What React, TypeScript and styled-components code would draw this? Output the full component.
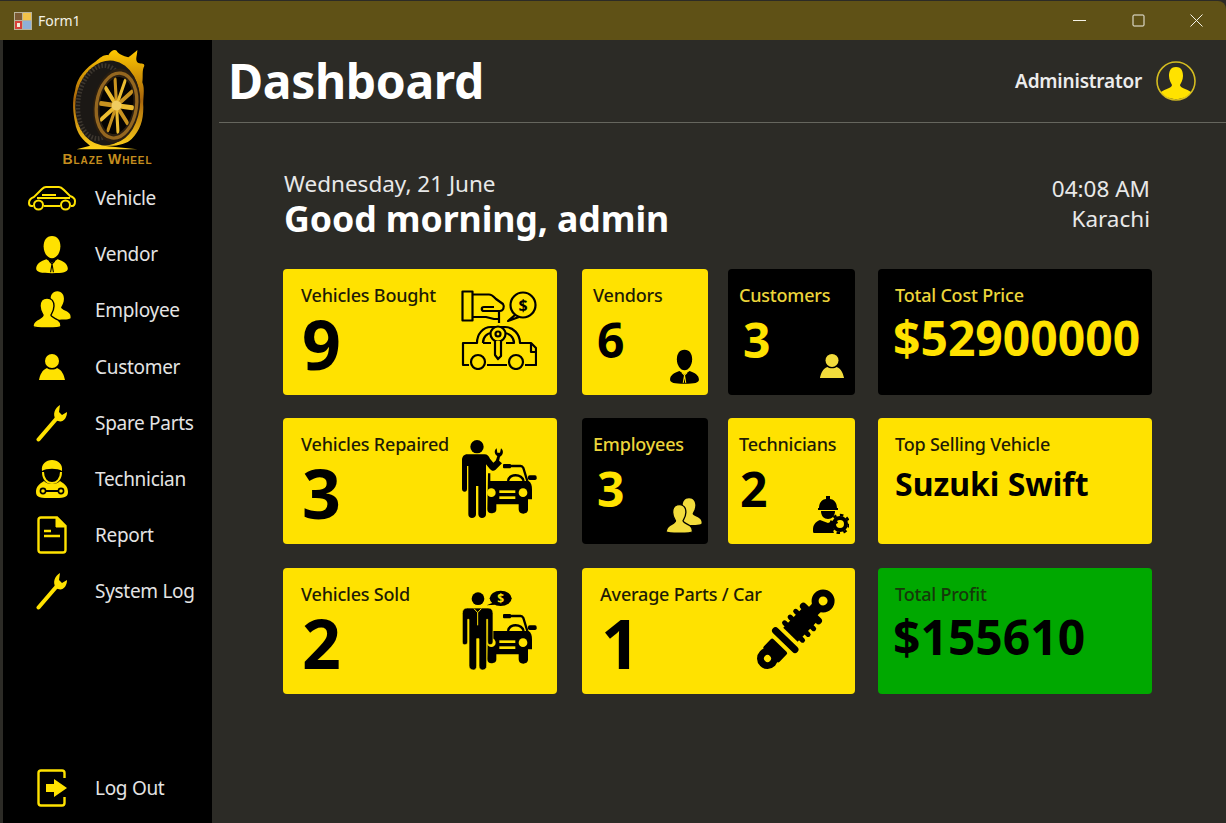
import React from 'react';
import styled, { createGlobalStyle } from 'styled-components';

const YELLOW = '#ffe200';
const PANEL = '#2c2b26';

const GlobalStyle = createGlobalStyle`
    html, body {
        margin: 0;
        padding: 0;
        background: ${PANEL};
        font-family: 'Noto Sans', 'Open Sans', sans-serif;
    }
`;

const Window = styled.div`
    width: 1226px;
    height: 823px;
    overflow: hidden;
    display: flex;
    flex-direction: column;
    background: ${PANEL};
`;

const TitleBar = styled.div`
    height: 39px;
    margin-top: 1px;
    flex: none;
    display: flex;
    align-items: center;
    padding-left: 14px;
    background: #5f5116;
    border-top-right-radius: 8px;
    color: #f4f2e6;
    font-size: 14px;
`;

const TitleText = styled.span`
    margin-left: 6px;
    flex: 1;
`;

const WinButton = styled.div`
    width: 58.5px;
    height: 39px;
    display: flex;
    align-items: center;
    justify-content: center;
`;

const Body = styled.div`
    flex: 1;
    display: flex;
    padding-left: 3px;
    min-height: 0;
`;

const Sidebar = styled.nav`
    width: 209px;
    flex: none;
    background: #000;
    display: flex;
    flex-direction: column;
    padding-top: 8px;
    box-sizing: border-box;
`;

const Brand = styled.div`
    height: 122px;
    flex: none;
    display: flex;
    flex-direction: column;
    align-items: center;
`;

const LogoMark = styled.div`
    display: flex;
    margin-left: 5px;
`;

const BrandName = styled.div`
    margin-top: 2px;
    font-family: 'Liberation Sans', sans-serif;
    font-variant: small-caps;
    font-weight: 700;
    font-size: 14px;
    line-height: 14px;
    letter-spacing: 0.9px;
    color: #c48d1e;
`;

const NavList = styled.div`
    flex: 1;
    display: flex;
    flex-direction: column;
`;

const NavRow = styled.div<{ $foot?: boolean }>`
    height: 56.2px;
    flex: none;
    display: flex;
    align-items: center;
    margin-top: ${p => (p.$foot ? 'auto' : '0')};
    margin-bottom: ${p => (p.$foot ? '7px' : '0')};
    color: #e4e4e4;
    font-size: 19px;
    letter-spacing: -0.3px;
`;

const NavIcon = styled.div`
    width: 92px;
    flex: none;
    display: flex;
    justify-content: center;
    padding-left: 6px;
    box-sizing: border-box;
`;

const Main = styled.main`
    flex: 1;
    min-width: 0;
    padding-left: 7px;
`;

const Header = styled.header`
    height: 83px;
    box-sizing: border-box;
    border-bottom: 1px solid #66665e;
    display: flex;
    align-items: center;
    padding: 0 30px 1px 9px;
`;

const PageTitle = styled.h1`
    margin: 0;
    flex: 1;
    color: #fff;
    font-size: 48px;
    font-weight: 700;
    letter-spacing: -0.35px;
    line-height: 1;
`;

const UserName = styled.span`
    color: #ececec;
    font-size: 19px;
    font-weight: 600;
    letter-spacing: -0.2px;
    margin-right: 14px;
`;

const Content = styled.section`
    padding: 46px 0 0 64px;
    width: 870px;
`;

const Greeting = styled.div`
    display: flex;
    justify-content: space-between;
    height: 100px;
    padding-left: 1px;
    padding-right: 3px;
`;

const DateLine = styled.div`
    color: #e8e8e8;
    font-size: 22.5px;
    line-height: 30px;
`;

const Hello = styled.div`
    color: #fff;
    font-size: 35.7px;
    font-weight: 700;
    line-height: 38px;
    letter-spacing: -0.1px;
`;

const Clock = styled.div`
    padding-top: 5px;
    text-align: right;
    color: #e8e8e8;
    font-size: 22.5px;
    line-height: 30px;
`;

const Cards = styled.div`
    display: grid;
    grid-template-columns: 274px 25px 126px 20px 127px 23px 274px;
    grid-template-rows: 126px 127px 126px;
    row-gap: 23px;
    align-items: start;
`;

type Tone = 'yellow' | 'black' | 'green';

const toneBg: Record<Tone, string> = { yellow: YELLOW, black: '#000', green: '#00a800' };
const toneFg: Record<Tone, string> = { yellow: '#000', black: YELLOW, green: '#000' };
const toneLabel: Record<Tone, string> = { yellow: '#1e1b05', black: '#ecd53a', green: '#16380a' };

const Card = styled.div<{ $tone: Tone; $from: number; $span: number; $pad: number }>`
    grid-column: ${p => p.$from} / span ${p => p.$span};
    height: 126px;
    background: ${p => toneBg[p.$tone]};
    color: ${p => toneFg[p.$tone]};
    border-radius: 4px;
    padding: 14px 0 0 ${p => p.$pad}px;
    box-sizing: border-box;
    display: flex;
    flex-direction: column;
    position: relative;
    overflow: hidden;
`;

const CardLabel = styled.div<{ $tone: Tone }>`
    color: ${p => toneLabel[p.$tone]};
    font-size: 18px;
    font-weight: 500;
    line-height: 24px;
    letter-spacing: -0.2px;
    white-space: nowrap;
`;

const CardValue = styled.div<{ $size: number; $inset: number; $drop: number }>`
    font-size: ${p => p.$size}px;
    font-weight: 700;
    line-height: ${p => p.$size * 1.1}px;
    margin-left: ${p => p.$inset}px;
    margin-top: ${p => p.$drop}px;
    white-space: nowrap;
`;

const CardIcon = styled.div<{ $right: number; $bottom: number }>`
    position: absolute;
    right: ${p => p.$right}px;
    bottom: ${p => p.$bottom}px;
    display: flex;
`;

/* ---- drawings ---- */

const FormIcon = () => (
    <svg width="18" height="18" viewBox="0 0 18 18">
        <rect width="18" height="18" fill="#b9b39a" />
        <rect x="1" y="1" width="7" height="7" fill="#7b5a34" />
        <rect x="9" y="1" width="8" height="7" fill="#f2c34a" />
        <rect x="1" y="9" width="7" height="8" fill="#d8403a" />
        <rect x="9" y="9" width="8" height="8" fill="#8fb0d8" />
        <rect x="3" y="11" width="3" height="4" fill="#f4ecd8" />
    </svg>
);

const spokeAngles = [0, 36, 72, 108, 144, 180, 216, 252, 288, 324];

const TireLogo = () => (
    <svg width="100" height="102" viewBox="0 12 300 306">
        <defs>
            <linearGradient id="flame" x1="0" y1="0" x2="0" y2="1">
                <stop offset="0" stopColor="#ffc800" />
                <stop offset="0.5" stopColor="#a8640a" />
                <stop offset="1" stopColor="#ffd21a" />
            </linearGradient>
        </defs>
        <path
            d="M108 52 C120 40 135 30 145 34 C150 20 165 14 170 20 C175 30 190 35 205 40 C215 32 225 25 232 18 C232 35 225 45 232 55 C240 62 252 55 253 65 C245 80 250 95 247 115 C256 135 248 165 250 190 C250 230 240 260 215 285 C200 300 170 308 130 305 L232 316 L50 316 L90 305 C70 290 50 270 45 235 C40 210 35 170 45 140 C50 100 80 70 108 52 Z"
            fill="url(#flame)"
        />
        <g transform="rotate(8 150 180)">
            <ellipse cx="142" cy="178" rx="96" ry="128" fill="#1b1815" />
            <ellipse cx="122" cy="178" rx="68" ry="110" fill="none" stroke="#3c362e" strokeWidth="14" strokeDasharray="5 5" />
            <ellipse cx="170" cy="182" rx="70" ry="112" fill="#2a1e10" />
            <ellipse cx="170" cy="182" rx="60" ry="98" fill="none" stroke="#94661f" strokeWidth="10" />
            <ellipse cx="170" cy="182" rx="50" ry="86" fill="#050302" />
            <g transform="translate(170 182) scale(1 1.65)">
                {spokeAngles.map((a, i) => (
                    <line
                        key={a}
                        x1="0"
                        y1="0"
                        x2="48"
                        y2="0"
                        transform={`rotate(${a})`}
                        stroke={i % 2 ? '#c8921f' : '#ecbc30'}
                        strokeWidth="9"
                        strokeLinecap="round"
                    />
                ))}
            </g>
            <circle cx="170" cy="182" r="15" fill="#f0cc60" />
        </g>
    </svg>
);

const CarOutline = () => (
    <svg width="48" height="25" viewBox="0 0 48 25" fill="none" stroke={YELLOW} strokeWidth="2">
        <path d="M5 20 H3.5 C2 20 1 19 1 17 C1 14 3 12 6 11 L14 3 C15 2 16 1 18 1 H31 C33 1 34 2 36 4 L42 10 C45 11 47 12 47 15 C47 18 46 20 44 20 H43 M32 20 H16" />
        <path d="M14 9 H28 M9 12 H42" />
        <circle cx="10.5" cy="19" r="4.5" />
        <circle cx="37.5" cy="19" r="4.5" />
    </svg>
);

const SuitPerson = ({ size, color, cut }: { size: number; color: string; cut: string }) => (
    <svg width={size} height={size * 1.15} viewBox="0 0 36 42">
        <path d="M18 1 C24 1 27 6 27 12 C27 19 23 25 18 25 C13 25 9 19 9 12 C9 6 12 1 18 1 Z" fill={color} />
        <path d="M12 26 L18 30 L24 26 C30 28 35 31 35 36 C35 40 30 41 18 41 C6 41 1 40 1 36 C1 31 6 28 12 26 Z" fill={color} />
        <path d="M15 28 L18 31 L21 28 M18 31 L16.5 40 M18 31 L19.5 40" stroke={cut} strokeWidth="1.2" fill="none" />
    </svg>
);

const personPath =
    'M14 7 C19 7 21 11 21 15 C21 19 19 22 18 24 C18 26 22 27 25 29 C28 31 28 33 28 35 C28 37 20 37 14 37 C8 37 0 37 0 35 C0 33 1 31 4 29 C7 27 10 26 10 24 C9 22 7 19 7 15 C7 11 9 7 14 7 Z';

const TwoPeople = ({ size, color, cut }: { size: number; color: string; cut: string }) => (
    <svg width={size} height={size} viewBox="0 0 38 38">
        <path d={personPath} transform="translate(11 -6.5) scale(0.95)" fill={color} />
        <path d={personPath} fill={color} stroke={cut} strokeWidth="1.4" />
    </svg>
);

const Bust = ({ size, color }: { size: number; color: string }) => (
    <svg width={size} height={size} viewBox="0 0 28 28" fill={color}>
        <circle cx="14" cy="8" r="7" />
        <path d="M9 15 C11 17 17 17 19 15 C24 17 26 22 27 27 H1 C2 22 4 17 9 15 Z" />
    </svg>
);

const Wrench = () => (
    <svg width="32" height="38" viewBox="0 0 32 38">
        <path d="M2.5 35.5 L21 14" stroke={YELLOW} strokeWidth="4" strokeLinecap="round" />
        <path d="M20 16 C16 10 19 4 24 1 L23 8 L26 11 L31 8 C31 15 26 20 20 16 Z" fill={YELLOW} />
    </svg>
);

const TechnicianIcon = () => (
    <svg width="34" height="40" viewBox="0 0 34 40">
        <path d="M7 12 C6 5 11 1 17 1 C23 1 28 5 27 12 C23 9 11 9 7 12 Z" fill={YELLOW} />
        <path d="M8 13 C8 20 12 24 17 24 C22 24 26 20 26 13" fill="none" stroke={YELLOW} strokeWidth="2" />
        <path d="M9 22 C12 26 22 26 25 22 C30 25 33 28 33 33 C33 39 28 39 17 39 C6 39 1 39 1 33 C1 28 4 25 9 22 Z" fill={YELLOW} />
        <path d="M10 32 H24" stroke="#000" strokeWidth="2" />
        <circle cx="8" cy="32" r="2.6" fill="none" stroke="#000" strokeWidth="1.6" />
        <circle cx="26" cy="32" r="2.6" fill="none" stroke="#000" strokeWidth="1.6" />
    </svg>
);

const ReportIcon = () => (
    <svg width="30" height="38" viewBox="0 0 30 38" fill="none" stroke={YELLOW} strokeWidth="2.4">
        <path d="M4 1.5 H20 L28.5 10 V34 C28.5 35.5 27.5 36.5 26 36.5 H4 C2.5 36.5 1.5 35.5 1.5 34 V4 C1.5 2.5 2.5 1.5 4 1.5 Z" />
        <path d="M19 1.5 L28.5 11 H19 Z" fill={YELLOW} strokeWidth="1" />
        <path d="M7 15 H14 M7 20 H23" />
    </svg>
);

const LogoutIcon = () => (
    <svg width="31" height="38" viewBox="0 0 31 38" fill="none">
        <path d="M27.5 9 V4 C27.5 2.5 26.5 1.5 25 1.5 H4 C2.5 1.5 1.5 2.5 1.5 4 V34 C1.5 35.5 2.5 36.5 4 36.5 H25 C26.5 36.5 27.5 35.5 27.5 34 V28" stroke={YELLOW} strokeWidth="2.4" />
        <path d="M9 15 H17 V10 L30 19 L17 28 V23 H9 Z" fill={YELLOW} />
    </svg>
);

const AvatarIcon = () => (
    <svg width="40" height="40" viewBox="0 0 40 40">
        <circle cx="20" cy="20" r="19" fill="none" stroke="#d4bc20" strokeWidth="1.6" />
        <path d="M20 6 C26 6 27 11 27 15 C27 19 25 22 24 24 C24 27 31 28 35 31 C31 36 26 38 20 38 C14 38 9 36 5 31 C9 28 16 27 16 24 C15 22 13 19 13 15 C13 11 14 6 20 6 Z" fill={YELLOW} />
    </svg>
);

const WinGlyph = ({ kind }: { kind: 'min' | 'max' | 'close' }) => (
    <svg width="13" height="13" viewBox="0 0 13 13" fill="none" stroke="#f4f2e6" strokeWidth="1">
        {kind === 'min' && <path d="M0 6.5 H13" />}
        {kind === 'max' && <rect x="1" y="1" width="11" height="11" rx="1" />}
        {kind === 'close' && <path d="M0.5 0.5 L12.5 12.5 M12.5 0.5 L0.5 12.5" />}
    </svg>
);

const KeyCarIcon = () => (
    <svg width="76" height="80" viewBox="0 0 76 80" fill="none" stroke="#000" strokeWidth="2.2" strokeLinejoin="round">
        <rect x="1.5" y="1.5" width="10" height="29" />
        <path d="M12 4.5 H28 C31 4.5 33 7 35 9 L42 14 C44 17 42 21 39 21 H23 C20 21 20 17 23 17 H33 M12 27 H25 L33 29 H39" />
        <path d="M38 21 V33" />
        <circle cx="62" cy="15" r="12.5" />
        <path d="M54 25 L47 31 L58 27" />
        <text x="62" y="21" fontSize="16" fontWeight="700" textAnchor="middle" fill="#000" stroke="none" fontFamily="'Noto Sans', sans-serif">$</text>
        <path d="M8 75 H2 V53 H16 C16 44 22 37 30 37 H44 C52 37 59 44 59 53 H70 L75 58 V75 H64 M46 75 H26" />
        <path d="M22 53 C22 47 26 43 31 43 M43 43 C48 43 53 47 53 53 H45 M22 53 H30 M70 53 V62 H75" />
        <circle cx="17" cy="72" r="7" fill={YELLOW} />
        <circle cx="55" cy="72" r="7" fill={YELLOW} />
        <circle cx="37" cy="44" r="7.5" fill={YELLOW} />
        <circle cx="37" cy="44" r="2.5" />
        <path d="M34 51 V65 L37 69 L40 66 V51" fill={YELLOW} />
    </svg>
);

const CarFront = () => (
    <g>
        <path d="M158 90 H188 C192 90 194 92 196 96 L208 135" fill="none" stroke="#000" strokeWidth="7" />
        <rect x="135" y="84" width="24" height="13" rx="3" fill="#000" />
        <rect x="210" y="118" width="26" height="14" rx="5" fill="#000" />
        <path d="M150 135 C155 112 190 112 197 135" fill="none" stroke="#000" strokeWidth="7" />
        <path d="M90 112 H97 V135 H212 C220 140 222 150 222 160 V190 H210 V220 C210 230 203 233 196 233 C187 233 182 228 182 220 V205 H115 V220 C115 230 107 232 100 232 C93 232 88 228 88 220 Z" fill="#000" />
        <circle cx="100" cy="170" r="13" fill={YELLOW} />
        <circle cx="195" cy="170" r="13" fill={YELLOW} />
        <rect x="124" y="163" width="48" height="8" fill={YELLOW} />
        <rect x="124" y="181" width="48" height="8" fill={YELLOW} />
    </g>
);

const MechanicIcon = () => (
    <svg width="84" height="86" viewBox="0 0 252 258">
        <CarFront />
        <circle cx="57" cy="32" r="20" fill="#000" />
        <path d="M28 55 C18 55 12 62 12 72 V158 C12 164 15 167 20 167 C25 167 27 164 27 158 V90 H31 V235 C31 243 36 246 42 246 C48 246 54 243 54 235 V150 H61 V235 C62 243 66 246 72 246 C78 246 84 243 84 235 V85 L95 98 C100 104 106 106 112 102 L132 82 L118 70 L106 80 L96 68 C92 60 88 55 80 55 Z" fill="#000" />
        <path d="M112 78 L118 60 C108 55 108 42 116 37 L118 50 L126 50 L129 37 C138 44 136 58 126 62 L122 80 Z" fill="#000" />
    </svg>
);

const SellerIcon = () => (
    <svg width="84" height="88" viewBox="0 0 252 264">
        <CarFront />
        <circle cx="60" cy="38" r="19" fill="#000" />
        <ellipse cx="128" cy="37" rx="33" ry="23" fill="#000" />
        <path d="M104 50 L86 58 L112 56 Z" fill="#000" />
        <text x="128" y="50" fontSize="36" fontWeight="700" textAnchor="middle" fill={YELLOW} fontFamily="'Noto Sans', sans-serif">$</text>
        <path d="M28 66 C18 66 13 72 13 82 V168 C13 174 16 176 20 176 C25 176 29 174 29 168 V100 H33 V240 C33 248 40 252 46 252 C52 252 56 248 56 240 V158 H63 V240 C63 248 68 252 74 252 C80 252 86 248 86 240 V100 H89 V168 C89 174 92 176 96 176 C100 176 105 174 105 168 V82 C105 72 100 66 90 66 Z" fill="#000" stroke={YELLOW} strokeWidth="2" />
        <path d="M48 68 L59 80 L70 68 M59 80 V118" stroke={YELLOW} strokeWidth="3" fill="none" />
    </svg>
);

const ShockIcon = () => (
    <svg width="78" height="84" viewBox="0 0 78 84">
        <g transform="rotate(44 39 42)">
            <circle cx="39" cy="3" r="8" fill="none" stroke="#000" strokeWidth="7" />
            <rect x="33" y="10" width="12" height="10" fill="#000" />
            <rect x="25" y="17" width="28" height="7" rx="3.5" fill="#000" />
            <rect x="29" y="22" width="20" height="28" fill="#000" />
            <rect x="24" y="27" width="30" height="5" rx="2.5" fill="#000" />
            <rect x="24" y="35" width="30" height="5" rx="2.5" fill="#000" />
            <rect x="24" y="43" width="30" height="5" rx="2.5" fill="#000" />
            <rect x="22" y="54" width="34" height="7" rx="3.5" fill="#000" />
            <rect x="28" y="65" width="22" height="14" rx="2" fill="#000" />
            <circle cx="39" cy="83" r="7" fill="none" stroke="#000" strokeWidth="7" />
        </g>
    </svg>
);

const EngineerIcon = () => (
    <svg width="36" height="38" viewBox="0 0 36 38">
        <path d="M6 12 C6 6 10 3 13 3 V0 H17 V3 C20 3 24 6 24 12 H25 V14 H5 V12 Z" fill="#000" />
        <path d="M8 15 H22 C22 20 19 23 15 23 C11 23 8 20 8 15 Z" fill="#000" />
        <path d="M7 24 L15 27 L22 24 C24 25 25 26 25 27 C21 29 19 33 21 37 H1 C0 37 0 36 0 34 C0 29 2 26 7 24 Z" fill="#000" />
        <circle cx="27" cy="28" r="6" fill="none" stroke="#000" strokeWidth="4" />
        <circle cx="27" cy="28" r="9" fill="none" stroke="#000" strokeWidth="2.5" strokeDasharray="3.5 3.5" />
    </svg>
);

const navItems: { label: string; icon: React.ReactNode }[] = [
    { label: 'Vehicle', icon: <CarOutline /> },
    { label: 'Vendor', icon: <SuitPerson size={34} color={YELLOW} cut="#000" /> },
    { label: 'Employee', icon: <TwoPeople size={38} color={YELLOW} cut="#000" /> },
    { label: 'Customer', icon: <Bust size={28} color={YELLOW} /> },
    { label: 'Spare Parts', icon: <Wrench /> },
    { label: 'Technician', icon: <TechnicianIcon /> },
    { label: 'Report', icon: <ReportIcon /> },
    { label: 'System Log', icon: <Wrench /> },
];

export default function App() {
    return (
        <Window>
            <GlobalStyle />
            <TitleBar>
                <FormIcon />
                <TitleText>Form1</TitleText>
                <WinButton><WinGlyph kind="min" /></WinButton>
                <WinButton><WinGlyph kind="max" /></WinButton>
                <WinButton><WinGlyph kind="close" /></WinButton>
            </TitleBar>
            <Body>
                <Sidebar>
                    <Brand>
                        <LogoMark><TireLogo /></LogoMark>
                        <BrandName>Blaze Wheel</BrandName>
                    </Brand>
                    <NavList>
                        {navItems.map(item => (
                            <NavRow key={item.label}>
                                <NavIcon>{item.icon}</NavIcon>
                                {item.label}
                            </NavRow>
                        ))}
                        <NavRow $foot>
                            <NavIcon><LogoutIcon /></NavIcon>
                            Log Out
                        </NavRow>
                    </NavList>
                </Sidebar>
                <Main>
                    <Header>
                        <PageTitle>Dashboard</PageTitle>
                        <UserName>Administrator</UserName>
                        <AvatarIcon />
                    </Header>
                    <Content>
                        <Greeting>
                            <div>
                                <DateLine>Wednesday, 21 June</DateLine>
                                <Hello>Good morning, admin</Hello>
                            </div>
                            <Clock>
                                04:08 AM
                                <br />
                                Karachi
                            </Clock>
                        </Greeting>
                        <Cards>
                            <Card $tone="yellow" $from={1} $span={1} $pad={18}>
                                <CardLabel $tone="yellow">Vehicles Bought</CardLabel>
                                <CardValue $size={68} $inset={1} $drop={0}>9</CardValue>
                                <CardIcon $right={20} $bottom={25}><KeyCarIcon /></CardIcon>
                            </Card>
                            <Card $tone="yellow" $from={3} $span={1} $pad={11}>
                                <CardLabel $tone="yellow">Vendors</CardLabel>
                                <CardValue $size={48} $inset={4} $drop={7}>6</CardValue>
                                <CardIcon $right={8} $bottom={10}>
                                    <SuitPerson size={31} color="#000" cut={YELLOW} />
                                </CardIcon>
                            </Card>
                            <Card $tone="black" $from={5} $span={1} $pad={11}>
                                <CardLabel $tone="black">Customers</CardLabel>
                                <CardValue $size={48} $inset={4} $drop={7}>3</CardValue>
                                <CardIcon $right={10} $bottom={16}><Bust size={26} color="#f2dc3c" /></CardIcon>
                            </Card>
                            <Card $tone="black" $from={7} $span={1} $pad={17}>
                                <CardLabel $tone="black">Total Cost Price</CardLabel>
                                <CardValue $size={48} $inset={-2} $drop={5}>$52900000</CardValue>
                            </Card>

                            <Card $tone="yellow" $from={1} $span={1} $pad={18}>
                                <CardLabel $tone="yellow">Vehicles Repaired</CardLabel>
                                <CardValue $size={68} $inset={1} $drop={0}>3</CardValue>
                                <CardIcon $right={15} $bottom={22}><MechanicIcon /></CardIcon>
                            </Card>
                            <Card $tone="black" $from={3} $span={1} $pad={11}>
                                <CardLabel $tone="black">Employees</CardLabel>
                                <CardValue $size={48} $inset={4} $drop={7}>3</CardValue>
                                <CardIcon $right={6} $bottom={10}><TwoPeople size={36} color="#f2dc3c" cut="#000" /></CardIcon>
                            </Card>
                            <Card $tone="yellow" $from={5} $span={1} $pad={11}>
                                <CardLabel $tone="yellow">Technicians</CardLabel>
                                <CardValue $size={48} $inset={1} $drop={7}>2</CardValue>
                                <CardIcon $right={6} $bottom={10}><EngineerIcon /></CardIcon>
                            </Card>
                            <Card $tone="yellow" $from={7} $span={1} $pad={17}>
                                <CardLabel $tone="yellow">Top Selling Vehicle</CardLabel>
                                <CardValue $size={32} $inset={0} $drop={10}>Suzuki Swift</CardValue>
                            </Card>

                            <Card $tone="yellow" $from={1} $span={1} $pad={18}>
                                <CardLabel $tone="yellow">Vehicles Sold</CardLabel>
                                <CardValue $size={68} $inset={1} $drop={0}>2</CardValue>
                                <CardIcon $right={15} $bottom={20}><SellerIcon /></CardIcon>
                            </Card>
                            <Card $tone="yellow" $from={3} $span={3} $pad={18}>
                                <CardLabel $tone="yellow">Average Parts / Car</CardLabel>
                                <CardValue $size={68} $inset={1} $drop={0}>1</CardValue>
                                <CardIcon $right={20} $bottom={23}><ShockIcon /></CardIcon>
                            </Card>
                            <Card $tone="green" $from={7} $span={1} $pad={17}>
                                <CardLabel $tone="green">Total Profit</CardLabel>
                                <CardValue $size={48} $inset={-2} $drop={5}>$155610</CardValue>
                            </Card>
                        </Cards>
                    </Content>
                </Main>
            </Body>
        </Window>
    );
}
